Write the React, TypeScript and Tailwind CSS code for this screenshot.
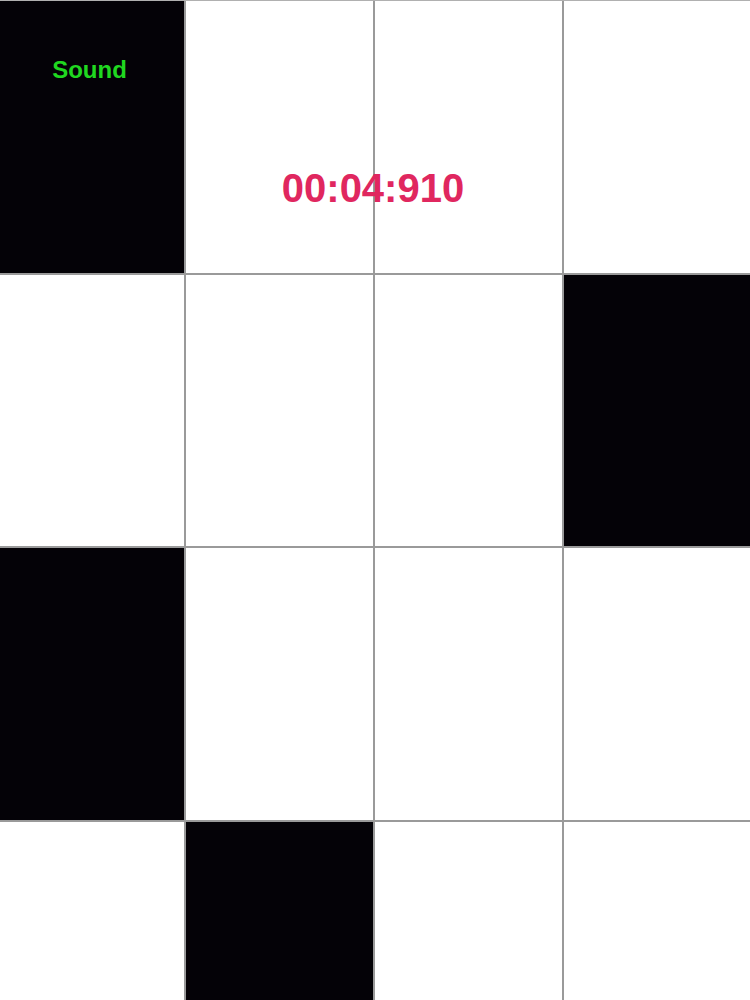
const rows: number[][] = [
  [1, 0, 0, 0],
  [0, 0, 0, 1],
  [1, 0, 0, 0],
  [0, 1, 0, 0],
];

export default function App() {
  return (
    <div className="relative h-[1000px] w-[750px] overflow-hidden bg-white font-['Liberation_Sans',Arial,sans-serif]">
      <div className="grid h-[1100px] grid-cols-[184px_187px_187px_186px] grid-rows-[272px_271px_272px_272px] gap-[2px] border-t border-[#b0b0b0] bg-[#9a9a9a]">
        {rows.flatMap((row, r) =>
          row.map((black, c) => (
            <div key={`${r}-${c}`} className={black ? "bg-[#040207]" : "bg-white"}>
              {r === 0 && c === 0 && (
                <div className="pr-[5px] pt-[55px] text-center text-[24px] font-bold leading-[28px] text-[#20d820]">
                  Sound
                </div>
              )}
            </div>
          ))
        )}
      </div>
      <div className="absolute left-0 right-0 top-[165px] pr-[4px] text-center text-[40px] font-bold leading-[46px] text-[#e0275f]">
        00:04:910
      </div>
    </div>
  );
}
